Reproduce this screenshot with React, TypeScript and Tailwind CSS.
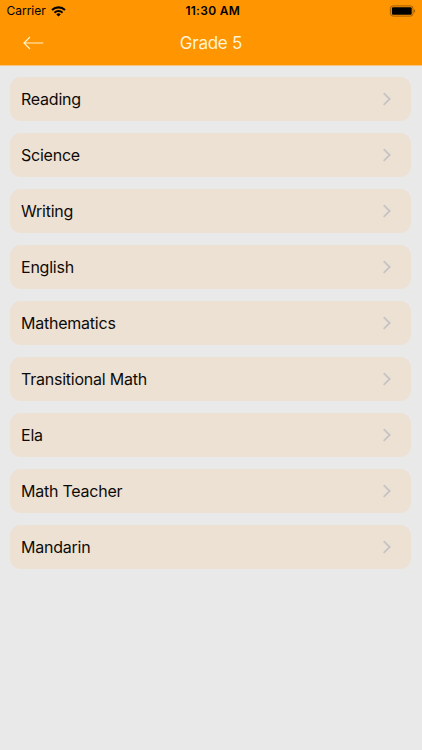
import React from "react";

interface Subject {
    id: number
    name: string
}

const subjects: Subject[] = [
    { id: 1, name: 'Reading' },
    { id: 2, name: 'Science' },
    { id: 3, name: 'Writing' },
    { id: 4, name: 'English' },
    { id: 5, name: 'Mathematics' },
    { id: 6, name: 'Transitional Math' },
    { id: 7, name: 'Ela' },
    { id: 8, name: 'Math Teacher' },
    { id: 9, name: 'Mandarin' },
]

const StatusBar: React.FunctionComponent = () => (
    <div className="grid h-[22px] grid-cols-3 items-center pl-[6.5px] pr-[6px] text-black">
        <div className="flex items-center gap-[5px]">
            <span className="text-[12px] leading-[22px] tracking-[-0.02px]">Carrier</span>
            <svg className="h-[11px] w-[15px]" viewBox="0 0 15 11" fill="none" stroke="currentColor" strokeWidth="2.1">
                <path d="M1 4.1a9.2 9.2 0 0 1 13 0" />
                <path d="M3.5 6.7a5.7 5.7 0 0 1 8 0" />
                <path d="M7.5 10.6 5.3 8.4a3.1 3.1 0 0 1 4.4 0z" fill="currentColor" stroke="none" />
            </svg>
        </div>
        <span className="pl-[3px] text-center text-[12px] font-semibold leading-[22px] tracking-[0.3px]">11:30 AM</span>
        <svg className="h-[12px] w-[27px] justify-self-end" viewBox="0 0 27 12">
            <rect x="1.4" y="0.9" width="22.6" height="10.2" rx="2.6" fill="none" stroke="#a35e00" />
            <rect x="2.9" y="2.3" width="19.8" height="7.4" rx="1.2" fill="#000" />
            <path d="M25 4.2c1.6.5 1.6 3.1 0 3.6z" fill="#a35e00" />
        </svg>
    </div>
)

const Header: React.FunctionComponent<{ title: string }> = (props) => (
    <header className="h-[66px] border-b border-[#f5c384] bg-[#ff9500]">
        <StatusBar />
        <div className="grid h-[42px] grid-cols-[60px_1fr_60px] items-center">
            <button className="pl-[23px]" aria-label="Back">
                <svg className="h-[14px] w-[21px]" viewBox="0 0 21 14" fill="none" stroke="#fff3c8" strokeWidth="1.2">
                    <path d="M20.2 7H1M7 1 1 7l6 6" />
                </svg>
            </button>
            <h1 className="pt-[2px] text-center text-[17px] font-normal tracking-[-0.25px] text-[#fff3d6]">{props.title}</h1>
        </div>
    </header>
)

const App: React.FunctionComponent = () => {
    return (
        <div className="flex min-h-screen flex-col bg-[#e9e9e9] font-['Inter','Liberation_Sans',sans-serif]">
            <Header title="Grade 5" />
            <ul role="list" className="flex flex-col gap-[12px] pl-[10px] pr-[11px] pt-[11px]">
                {subjects.map((item) => (
                    <li className="flex h-[44px] items-center justify-between rounded-[10px] bg-[#ede1d3] pl-[11px] pr-[20px]" key={item.id}>
                        <span className="text-[16px] tracking-[-0.23px] text-[#0d0b08]">{item.name}</span>
                        <svg className="mb-px h-[14px] w-[9px]" viewBox="0 0 9 14" fill="none" stroke="#c6c3c4" strokeWidth="1.8">
                            <path d="M1.7 1.2 7.7 7l-6 5.8" />
                        </svg>
                    </li>
                ))}
            </ul>
        </div>
    )
}

export default App
